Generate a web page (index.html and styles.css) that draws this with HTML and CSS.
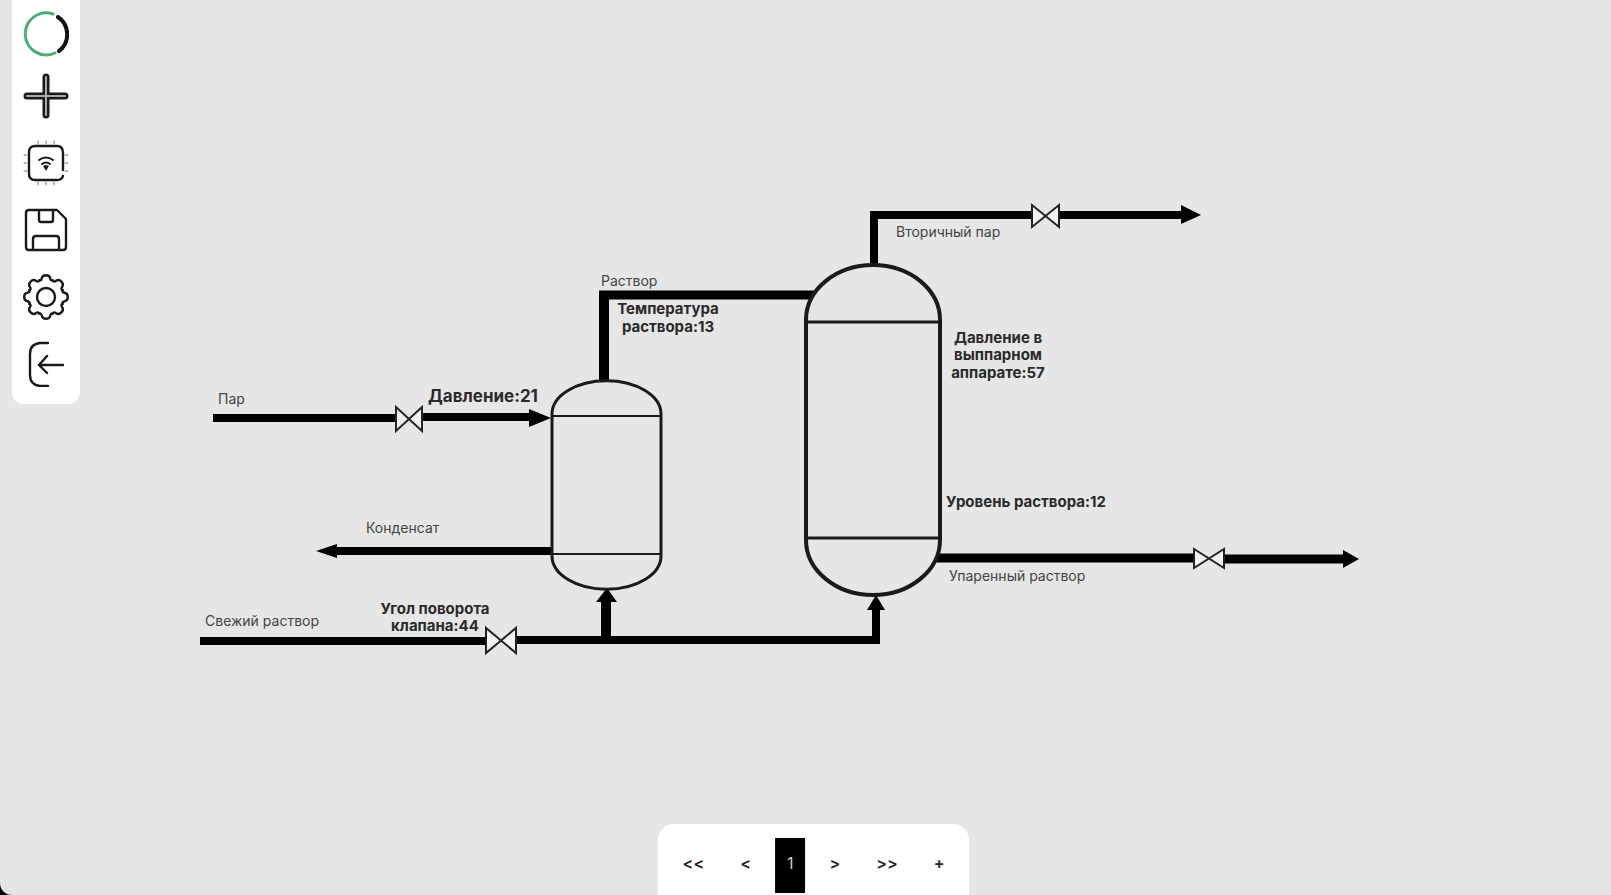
FILE: index.html
```html
<!DOCTYPE html>
<html lang="ru">
<head>
<meta charset="utf-8">
<meta name="viewport" content="width=device-width, initial-scale=1">
<title>Мнемосхема</title>
<link rel="stylesheet" href="styles.css">
</head>
<body>
<main class="workspace">
  <svg class="scheme" viewBox="0 0 1611 895" preserveAspectRatio="xMidYMid meet" role="img" aria-label="Схема выпарной установки">
    <g class="pipe">
      <path d="M213 418H395M422 417H530" stroke-width="8"/>
      <path d="M336 551H552" stroke-width="8"/>
      <path d="M200 641H486" stroke-width="8"/>
      <path d="M516 640H876V609" stroke-width="8"/>
      <path d="M606 640V600M604 380V295" stroke-width="10"/>
      <path d="M599 295H814" stroke-width="9"/>
      <path d="M874 265V215H1031M1059 215H1182" stroke-width="8"/>
      <path d="M937 558H1194M1224 559H1344" stroke-width="9"/>
    </g>
    <g class="arrow">
      <path d="M529 409L551 418L529 427Z"/>
      <path d="M337 544L316 551L337 558Z"/>
      <path d="M596 602L607 588L617 602Z"/>
      <path d="M867 610L876 595L885 610Z"/>
      <path d="M1181 205L1201 215L1181 224Z"/>
      <path d="M1343 550L1359 559L1343 568Z"/>
    </g>
    <g class="vessel">
      <path d="M552 414A54 33 0 0 1 661 414V556A54 33 0 0 1 552 556Z" stroke-width="3"/>
      <path d="M552 416H661M552 554H661" stroke-width="2"/>
      <path d="M806 320A67 55 0 0 1 940 320V540A67 55 0 0 1 806 540Z" stroke-width="4"/>
      <path d="M806 322H940M806 538H940" stroke-width="3"/>
    </g>
    <g class="valve">
      <path d="M396 407V431L422 407V431Z"/>
      <path d="M486 628V653L516 628V653Z"/>
      <path d="M1032 205V227L1059 205V227Z"/>
      <path d="M1194 549V568L1224 549V568Z"/>
    </g>
    <g class="flow-label">
      <text x="218" y="404">Пар</text>
      <text x="366" y="533">Конденсат</text>
      <text x="205" y="626">Свежий раствор</text>
      <text x="601" y="286">Раствор</text>
      <text x="896" y="237">Вторичный пар</text>
      <text x="949" y="581">Упаренный раствор</text>
    </g>
    <g class="reading">
      <text class="reading-large" x="483" y="402">Давление:21</text>
      <text x="435" y="614">Угол поворота</text>
      <text x="435" y="631">клапана:44</text>
      <text x="668" y="314">Температура</text>
      <text x="668" y="332">раствора:13</text>
      <text x="998" y="343">Давление в</text>
      <text x="998" y="360">выппарном</text>
      <text x="998" y="378">аппарате:57</text>
      <text x="1026" y="507">Уровень раствора:12</text>
    </g>
  </svg>

  <nav class="toolbar" aria-label="Инструменты">
    <button class="tool" type="button" aria-label="Состояние">
      <svg viewBox="0 0 46 46"><path class="ring-main" d="M30 3A21 21 0 1 0 32 42"/><path class="ring-rest" d="M35 6A21 21 0 0 1 36 40"/></svg>
    </button>
    <div class="tool-list">
      <button class="tool" type="button" aria-label="Добавить">
        <svg viewBox="0 0 46 46"><path class="plus-edge" d="M23 4V42M4 23H42"/><path class="plus-core" d="M23 4V42M4 23H42"/></svg>
      </button>
      <button class="tool" type="button" aria-label="Датчики">
        <svg viewBox="0 0 46 46"><path class="line" d="M40 30V13Q40 6 34 6H12Q6 6 6 12V34Q6 40 12 40H34Q39 40 40 36"/><path class="pins" d="M15 4V1M23 4V1M31 4V1M15 42V45M23 42V45M31 42V45M4 15H1M4 23H1M4 31H1M42 15H45M42 23H45M42 31H45"/><path class="wave" d="M16 20Q23 15 30 20M19 24Q23 21 27 24"/><path class="solid" d="M20 26Q23 24 26 26L23 31Z"/></svg>
      </button>
      <button class="tool" type="button" aria-label="Сохранить">
        <svg viewBox="0 0 46 46"><path class="line" d="M6 3H34L43 12V40Q43 43 40 43H6Q3 43 3 40V6Q3 3 6 3ZM16 3V13Q16 15 18 15H28Q30 15 30 13V3M10 43V32Q10 29 13 29H33Q36 29 36 32V43"/></svg>
      </button>
      <button class="tool" type="button" aria-label="Настройки">
        <svg viewBox="-23 -23 46 46">
          <defs><path id="tooth" d="M-6.9-16.6C-5.2-15.9-4.6-17-4.3-18.6C-3.8-21-2.5-21.8 0-21.8S3.8-21 4.3-18.6C4.6-17 5.2-15.9 6.9-16.6"/></defs>
          <g class="line"><use href="#tooth"/><use href="#tooth" transform="rotate(45)"/><use href="#tooth" transform="rotate(90)"/><use href="#tooth" transform="rotate(135)"/><use href="#tooth" transform="rotate(180)"/><use href="#tooth" transform="rotate(225)"/><use href="#tooth" transform="rotate(270)"/><use href="#tooth" transform="rotate(315)"/><circle r="9"/></g>
        </svg>
      </button>
      <button class="tool" type="button" aria-label="Выйти">
        <svg viewBox="0 0 46 46"><path class="line" d="M25 2H17Q7 3 7 13V34Q7 44 17 45H25M40 24H16M24 15L16 24L24 32"/></svg>
      </button>
    </div>
  </nav>

  <nav class="pager" aria-label="Страницы">
    <button class="page" type="button" aria-label="Первая страница">&lt;&lt;</button>
    <button class="page" type="button" aria-label="Предыдущая страница">&lt;</button>
    <button class="page page-current" type="button" aria-current="page">1</button>
    <button class="page" type="button" aria-label="Следующая страница">&gt;</button>
    <button class="page" type="button" aria-label="Последняя страница">&gt;&gt;</button>
    <button class="page" type="button" aria-label="Добавить страницу">+</button>
  </nav>
</main>
</body>
</html>
```

FILE: styles.css
```css
body {
  margin: 0;
  background: #000;
  font-family: Inter, "Noto Sans", sans-serif;
}

.workspace {
  position: relative;
  height: 100vh;
  overflow: hidden;
  background: #e6e6e6;
  border-bottom-left-radius: 12px;
}

.scheme {
  display: block;
  width: 100%;
  height: 100%;
}

.pipe {
  fill: none;
  stroke: #000;
}

.arrow {
  fill: #000;
}

.vessel {
  fill: #e6e6e6;
  stroke: #1a1a1a;
}

.valve {
  fill: #f2f2f2;
  stroke: #222;
  stroke-width: 2;
}

.flow-label {
  font-size: 14px;
  fill: #444;
}

.reading {
  font-size: 15px;
  font-weight: 700;
  fill: #2a2a2a;
  text-anchor: middle;
}

.reading-large {
  font-size: 17px;
}

.toolbar {
  position: absolute;
  top: 0;
  left: 12px;
  display: flex;
  flex-direction: column;
  gap: 16px;
  padding: 11px;
  padding-bottom: 17px;
  background: #fff;
  border-radius: 0 0 12px 12px;
}

.tool-list {
  display: flex;
  flex-direction: column;
  gap: 21px;
}

.tool {
  width: 46px;
  height: 46px;
  padding: 0;
  border: 0;
  background: none;
  cursor: pointer;
}

.tool svg {
  display: block;
  width: 100%;
  height: 100%;
  fill: none;
  stroke: #1a1a1a;
  stroke-width: 2.4;
  stroke-linecap: round;
  stroke-linejoin: round;
}

.tool .ring-main {
  stroke: #4cae76;
  stroke-width: 3;
}

.tool .ring-rest {
  stroke: #111;
  stroke-width: 4;
}

.tool .plus-edge {
  stroke-width: 7;
}

.tool .plus-core {
  stroke: #aaa;
  stroke-width: 2;
}

.tool .pins {
  stroke: #777;
  stroke-width: 1;
}

.tool .wave {
  stroke-width: 2;
}

.tool .solid {
  fill: #222;
  stroke: none;
}

.pager {
  position: absolute;
  bottom: 0;
  left: 50.5%;
  display: flex;
  gap: 12px;
  padding: 14px 13px 2px;
  background: #fff;
  border-radius: 16px 16px 0 0;
  transform: translateX(-50%);
}

.page {
  height: 55px;
  padding: 0 12px 5px;
  border: 0;
  background: none;
  color: #222;
  font: 600 16px Inter, "Noto Sans", sans-serif;
  cursor: pointer;
}

.page-current {
  background: #000;
  color: #ccc;
  font-weight: 400;
}
```
